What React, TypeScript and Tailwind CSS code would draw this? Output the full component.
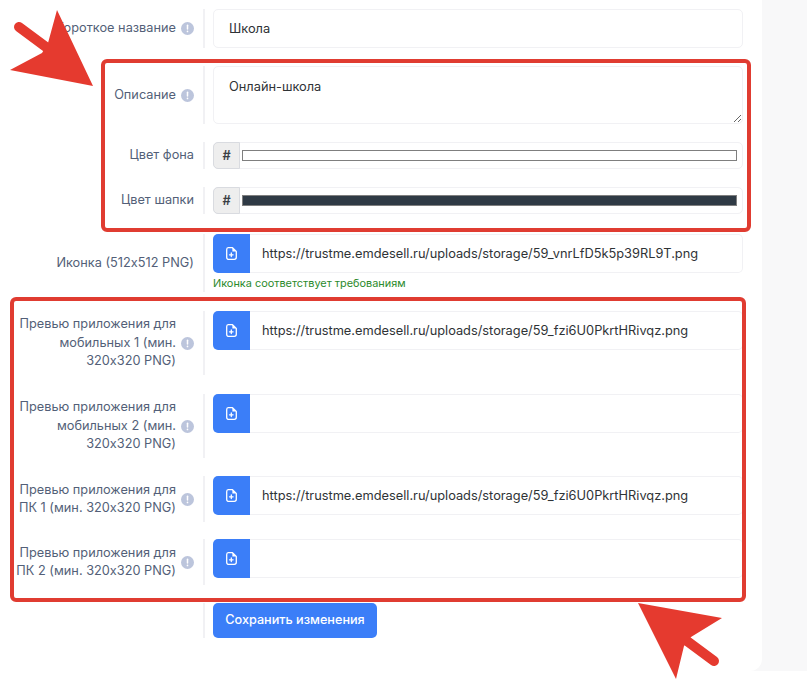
const labelCls = "flex w-[194px] shrink-0 items-center justify-end gap-[5px] text-right text-[12.75px] leading-[18.5px] text-[#535f78]";
const inputCls = "w-full rounded-[5px] border border-[#f1f1f4] bg-white px-[15px] text-[12.8px] text-[#2f3336] outline-none";

function InfoIcon() {
  return (
    <svg width="13" height="13" viewBox="0 0 13 13" className="shrink-0">
      <circle cx="6.5" cy="6.5" r="6.5" fill="#bcc5dc" />
      <path d="M6.5 3.2v3.9" stroke="#fff" strokeWidth="1.5" strokeLinecap="round" />
      <circle cx="6.5" cy="9.4" r="0.85" fill="#fff" />
    </svg>
  );
}

function FileIcon() {
  return (
    <svg width="11" height="13" viewBox="0 0 11 13" fill="none">
      <path
        d="M2.2.7h4.3l3.8 3.7v5.9c0 1.1-.9 2-2 2H2.2c-1.1 0-1.5-.9-1.5-2V2.7c0-1.1.4-2 1.5-2z"
        stroke="#fff"
        strokeWidth="1.3"
        strokeLinejoin="round"
      />
      <path d="M6.4.8v3.6h3.8" fill="#fff" />
      <path d="M5.3 6v3.6M3.5 7.8h3.6" stroke="#fff" strokeWidth="1.3" strokeLinecap="round" />
    </svg>
  );
}

function Row({
  label,
  info,
  mb = "mb-[18px]",
  children,
}: {
  label?: React.ReactNode;
  info?: boolean;
  mb?: string;
  children: React.ReactNode;
}) {
  return (
    <div className={`flex ${mb}`}>
      <div className={labelCls}>
        <span>{label}</span>
        {info && <InfoIcon />}
      </div>
      <div className="ml-[9px] w-[540px] border-l-2 border-[#f1f1f4] pl-[8px]">{children}</div>
    </div>
  );
}

function FileInput({ value, helper }: { value?: string; helper?: string }) {
  return (
    <div>
      <div className="flex h-[39px] w-[530px]">
        <div className="flex w-[37px] shrink-0 items-center justify-center rounded-l-[5px] bg-[#3b7ef8]">
          <FileIcon />
        </div>
        <input
          readOnly
          value={value ?? ""}
          className="w-full rounded-r-[5px] border-y border-r border-[#f1f1f4] bg-white pl-[12px] text-[12.8px] text-[#2f3336] outline-none"
        />
      </div>
      {helper && <div className="mt-[2px] text-[10.9px] leading-[17px] text-[#2b8a2b]">{helper}</div>}
    </div>
  );
}

function ColorInput({ color }: { color: string }) {
  return (
    <div className="flex h-[27px] w-[530px] items-center rounded-[5px] border border-[#f1f1f4] bg-white">
      <div className="-ml-px flex h-[27px] w-[27px] shrink-0 items-center justify-center rounded-l-[5px] border border-[#d9dbe0] bg-[#eeeeee] text-[12.8px] font-semibold text-[#3a3f45]">
        #
      </div>
      <div className={`ml-[2px] h-[11px] w-[495px] border border-[#7f7f7f] ${color}`} />
    </div>
  );
}

export default function App() {
  return (
    <div
      className="relative h-[681px] w-[807px] overflow-hidden bg-white"
      style={{ fontFamily: "Inter, 'Noto Sans', sans-serif" }}
    >
      <div className="h-[671px] bg-[#f8f8f9]">
        <div className="h-full w-[762px] rounded-br-xl bg-white pt-[9px]">
          <Row label="Короткое название" info>
            <input readOnly value="Школа" className={`${inputCls} h-[39px] w-[530px]`} />
          </Row>
          <Row label="Описание" info>
            <textarea
              readOnly
              defaultValue="Онлайн-школа"
              className={`${inputCls} block h-[58px] w-[518px] pt-[11px] leading-[18px]`}
            />
          </Row>
          <Row label="Цвет фона">
            <ColorInput color="bg-white" />
          </Row>
          <Row label="Цвет шапки" mb="mb-[20px]">
            <ColorInput color="bg-[#2f3a45]" />
          </Row>
          <Row label="Иконка (512x512 PNG)" mb="mb-[19px]">
            <FileInput
              value="https://trustme.emdesell.ru/uploads/storage/59_vnrLfD5k5p39RL9T.png"
              helper="Иконка соответствует требованиям"
            />
          </Row>
          <Row
            info
            mb="mb-[19px]"
            label={
              <>
                Превью приложения для
                <br />
                мобильных 1 (мин.
                <br />
                320x320 PNG)
              </>
            }
          >
            <div className="h-[64px]">
              <FileInput value="https://trustme.emdesell.ru/uploads/storage/59_fzi6U0PkrtHRivqz.png" />
            </div>
          </Row>
          <Row
            info
            label={
              <>
                Превью приложения для
                <br />
                мобильных 2 (мин.
                <br />
                320x320 PNG)
              </>
            }
          >
            <div className="h-[64px]">
              <FileInput />
            </div>
          </Row>
          <Row
            info
            mb="mb-[17px]"
            label={
              <>
                Превью приложения для
                <br />
                ПК 1 (мин. 320x320 PNG)
              </>
            }
          >
            <div className="h-[46px]">
              <FileInput value="https://trustme.emdesell.ru/uploads/storage/59_fzi6U0PkrtHRivqz.png" />
            </div>
          </Row>
          <Row
            info
            label={
              <>
                Превью приложения для
                <br />
                ПК 2 (мин. 320x320 PNG)
              </>
            }
          >
            <div className="h-[46px]">
              <FileInput />
            </div>
          </Row>
          <Row>
            <button className="h-[35px] w-[164px] rounded-[5px] bg-[#3b7ef8] text-[12.65px] font-medium text-white">
              Сохранить изменения
            </button>
          </Row>
        </div>
      </div>

      {/* Annotation frames */}
      <div className="absolute left-[101px] top-[59px] h-[173px] w-[650px] rounded-[6px] border-[4px] border-[#e03c31]" />
      <div className="absolute left-[10px] top-[297px] h-[305px] w-[736px] rounded-[6px] border-[4px] border-[#e03c31]" />

      {/* Annotation arrows */}
      <svg className="absolute left-0 top-0" width="807" height="681" viewBox="0 0 807 681" fill="none">
        <path d="M19 27 46 47" stroke="#e53a2f" strokeWidth="10" strokeLinecap="round" />
        <path d="M93 86 57 10 48 43 42 53 10 70Z" fill="#e53a2f" />
        <path d="M714 661 687 641" stroke="#e53a2f" strokeWidth="10" strokeLinecap="round" />
        <path d="M638 603 722 618 691 637 684 646 676 679Z" fill="#e53a2f" />
      </svg>
    </div>
  );
}
